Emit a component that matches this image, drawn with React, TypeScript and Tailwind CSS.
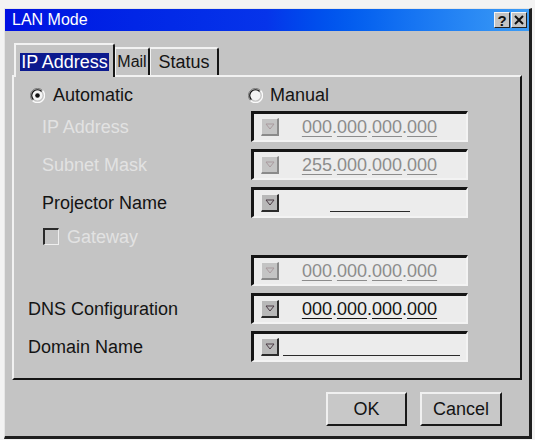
import React from "react";

const FONT = "font-['Liberation_Sans',Arial,sans-serif]";

function DropBtn({ disabled }: { disabled?: boolean }) {
  return (
    <div
      className={`w-[18px] h-[18px] shrink-0 flex items-center justify-center border-t border-l border-t-[#ededed] border-l-[#ededed] border-b-2 border-r-2 ${
        disabled ? "bg-[#c4c4c4] border-b-[#8a8a8a] border-r-[#8a8a8a]" : "bg-[#b8b8b8] border-b-[#2a2a2a] border-r-[#2a2a2a]"
      }`}
    >
      <svg width="10" height="7" viewBox="0 0 10 7">
        <path d="M1 1 H9 L5 6 Z" fill="none" stroke={disabled ? "#a99a9e" : "#4a3a44"} strokeWidth="1" />
      </svg>
    </div>
  );
}

function Field({ children, disabled }: { children?: React.ReactNode; disabled?: boolean }) {
  return (
    <div className="w-[217px] h-[31px] shrink-0 flex items-center bg-[#ececec] border-t-[3px] border-l-[3px] border-t-[#151515] border-l-[#151515] border-b-2 border-r-2 border-b-[#f3f3f3] border-r-[#f3f3f3] pl-[7px] pr-[6px]">
      <DropBtn disabled={disabled} />
      {children}
    </div>
  );
}

function Ip({ value, disabled }: { value: string; disabled?: boolean }) {
  const groups = value.split(".");
  const col = disabled ? "text-[#8c8c8c] decoration-[#8c8c8c]" : "text-[#141414] decoration-[#141414]";
  return (
    <div className={`flex-1 flex justify-center text-[18px] leading-none ${col}`}>
      {groups.map((g, i) => (
        <React.Fragment key={i}>
          <span className="underline decoration-1 underline-offset-[3px]">{g}</span>
          {i < groups.length - 1 && <span>.</span>}
        </React.Fragment>
      ))}
    </div>
  );
}

function Row({
  label,
  disabled,
  indent,
  children,
}: {
  label?: string;
  disabled?: boolean;
  indent: string;
  children: React.ReactNode;
}) {
  return (
    <div className="flex items-center h-[31px]">
      <div className={`w-[237px] shrink-0 text-[18px] leading-none ${indent} ${disabled ? "text-[#e2e2e2]" : "text-[#141414]"}`}>
        {label}
      </div>
      {children}
    </div>
  );
}

function Radio({ checked }: { checked?: boolean }) {
  return (
    <svg width="15" height="15" viewBox="0 0 15 15" className="shrink-0">
      <path d="M12.5 2.5 A7 7 0 0 0 2.5 12.5" fill="none" stroke="#7a7a7a" strokeWidth="1" />
      <path d="M11.5 3.5 A5.6 5.6 0 0 0 3.5 11.5" fill="none" stroke="#111" strokeWidth="1.4" />
      <circle cx="7.5" cy="7.5" r="5" fill="#f4f4f4" />
      <path d="M2.5 12.5 A7 7 0 0 0 12.5 2.5" fill="none" stroke="#fafafa" strokeWidth="1.4" />
      {checked && <circle cx="7.5" cy="7.5" r="2.3" fill="#111" />}
    </svg>
  );
}

export default function App() {
  return (
    <div className={`w-[535px] h-[440px] bg-[#f3f3f3] pt-[8px] pl-[4px] ${FONT}`}>
      <div className="w-[528px] h-[431px] bg-[#c4c4c4] border-t border-l border-t-[#e6e6e6] border-l-[#e6e6e6] border-r-[3px] border-b-[3px] border-r-[#1e1e1e] border-b-[#1e1e1e] flex flex-col">
        {/* title bar */}
        <div className="h-[22px] shrink-0 flex items-center bg-linear-to-r from-[#0010e2] via-[#0634ea] to-[#3c9cf6] pl-[7px] pr-[2px]">
          <span className="text-white text-[16px] leading-none">LAN Mode</span>
          <div className="ml-auto flex gap-[1px]">
            <div className="w-[16px] h-[16px] bg-[#c4c4c4] border-t border-l border-t-[#f4f4f4] border-l-[#f4f4f4] border-b border-r border-b-[#222] border-r-[#222] flex items-center justify-center text-[15px] font-bold leading-none text-[#111]">
              ?
            </div>
            <div className="w-[16px] h-[16px] bg-[#c4c4c4] border-t border-l border-t-[#f4f4f4] border-l-[#f4f4f4] border-b border-r border-b-[#222] border-r-[#222] flex items-center justify-center">
              <svg width="10" height="10" viewBox="0 0 10 10">
                <path d="M1 1 L9 9 M9 1 L1 9" stroke="#111" strokeWidth="2" />
              </svg>
            </div>
          </div>
        </div>

        {/* tabs */}
        <div className="px-[7px] pt-[12px]">
          <div className="flex items-end h-[32px] pl-[2px]">
            <div className="relative z-10 -mb-[2px] w-[101px] h-[34px] bg-[#c4c4c4] border-t-2 border-l-2 border-t-[#f2f2f2] border-l-[#f2f2f2] border-r-2 border-r-[#151515] rounded-tr-[3px] flex items-start justify-center pt-[8px]">
              <span className="bg-[#0c1a8e] text-white text-[18px] leading-[18px] px-[1px]">IP Address</span>
            </div>
            <div className="w-[35px] h-[28px] border-t-2 border-l border-t-[#f2f2f2] border-l-[#f2f2f2] border-r-2 border-r-[#151515] rounded-tr-[3px] flex items-start justify-center pt-[4px] text-[16px] leading-[18px] text-[#141414]">
              Mail
            </div>
            <div className="w-[69px] h-[28px] border-t-2 border-l border-t-[#f2f2f2] border-l-[#f2f2f2] border-r-2 border-r-[#151515] rounded-tr-[3px] flex items-start justify-center pt-[4px] text-[18px] leading-[18px] text-[#141414]">
              Status
            </div>
          </div>

          {/* panel */}
          <div className="h-[305px] border-t-2 border-l-2 border-t-[#f2f2f2] border-l-[#f2f2f2] border-r-2 border-b-2 border-r-[#151515] border-b-[#151515] flex flex-col">
            <div className="h-[22px] mt-[7px] flex items-center pl-[16px] text-[18px] leading-none text-[#141414]">
              <div className="w-[218px] flex items-center gap-[8px]">
                <Radio checked />
                <span>Automatic</span>
              </div>
              <div className="flex items-center gap-[7px]">
                <Radio />
                <span>Manual</span>
              </div>
            </div>

            <div className="mt-[5px] flex flex-col gap-[7px]">
              <Row label="IP Address" disabled indent="pl-[28px]">
                <Field disabled>
                  <Ip value="000.000.000.000" disabled />
                </Field>
              </Row>
              <Row label="Subnet Mask" disabled indent="pl-[28px]">
                <Field disabled>
                  <Ip value="255.000.000.000" disabled />
                </Field>
              </Row>
              <Row label="Projector Name" indent="pl-[28px]">
                <Field>
                  <div className="flex-1 flex justify-center self-end mb-[4px]">
                    <div className="w-[80px] border-b border-b-[#2a2a2a]" />
                  </div>
                </Field>
              </Row>
              <div className="h-[23px] flex items-center pl-[29px] gap-[8px] text-[18px] leading-none text-[#e2e2e2]">
                <div className="w-[16px] h-[17px] border-t-2 border-l-2 border-t-[#2a2a2a] border-l-[#2a2a2a] border-b border-r border-b-[#efefef] border-r-[#efefef]" />
                <span>Gateway</span>
              </div>
              <Row indent="pl-[28px]">
                <Field disabled>
                  <Ip value="000.000.000.000" disabled />
                </Field>
              </Row>
              <Row label="DNS Configuration" indent="pl-[14px]">
                <Field>
                  <Ip value="000.000.000.000" />
                </Field>
              </Row>
              <Row label="Domain Name" indent="pl-[14px]">
                <Field>
                  <div className="flex-1 self-end mb-[4px] ml-[4px] border-b border-b-[#2a2a2a]" />
                </Field>
              </Row>
            </div>
          </div>
        </div>

        {/* buttons */}
        <div className="flex justify-end gap-[13px] pr-[27px] pt-[12px]">
          <div className="w-[81px] h-[34px] bg-[#c8c8c8] border-t-2 border-l-2 border-t-[#f0f0f0] border-l-[#f0f0f0] border-r-2 border-b-2 border-r-[#1a1a1a] border-b-[#1a1a1a] flex items-center justify-center text-[18px] leading-none text-[#141414]">
            OK
          </div>
          <div className="w-[82px] h-[34px] bg-[#c8c8c8] border-t-2 border-l-2 border-t-[#f0f0f0] border-l-[#f0f0f0] border-r-2 border-b-2 border-r-[#1a1a1a] border-b-[#1a1a1a] flex items-center justify-center text-[18px] leading-none text-[#141414]">
            Cancel
          </div>
        </div>
      </div>
    </div>
  );
}
